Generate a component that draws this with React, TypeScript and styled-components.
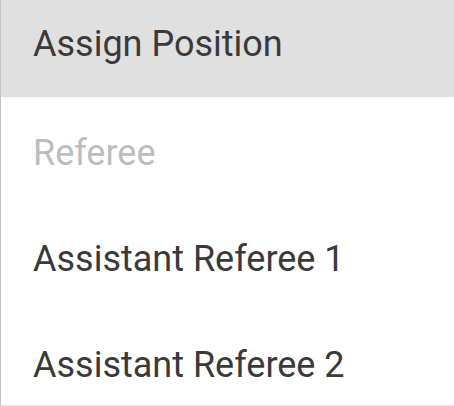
import * as React from "react";
import styled, { createGlobalStyle } from "styled-components";

const GlobalStyle = createGlobalStyle`
  html, body {
    margin: 0;
    padding: 0;
    background: #ffffff;
  }
  body {
    font-family: Roboto, "Liberation Sans", sans-serif;
  }
`;

const Wrapper = styled.div`
  display: flex;
  flex-direction: column;
  height: 405px;
  overflow: hidden;
  background: #ffffff;
  border-left: 1px solid #c4c4c4;
  border-bottom: 1px solid #dedede;
`;

const Header = styled.div`
  flex: none;
  box-sizing: border-box;
  height: 97px;
  padding: 23px 0 0 32px;
  background: #e0e0e0;
  box-shadow: 0 1px 3px rgba(0, 0, 0, 0.06);
  font-size: 36px;
  line-height: 42px;
  color: #3a3a3a;
`;

const List = styled.div`
  display: flex;
  flex-direction: column;
  padding-top: 3px;
`;

const Item = styled.div<{ $disabled?: boolean }>`
  flex: none;
  height: 106px;
  display: flex;
  align-items: center;
  padding-left: 32px;
  font-size: 36px;
  color: ${(p) => (p.$disabled ? "#bdbdbd" : "#3a3a3a")};
`;

const items = [
  { label: "Referee", disabled: true },
  { label: "Assistant Referee 1" },
  { label: "Assistant Referee 2" },
];

export default function App() {
  return (
    <>
      <GlobalStyle />
      <Wrapper>
        <Header>Assign Position</Header>
        <List>
          {items.map((it) => (
            <Item key={it.label} $disabled={it.disabled}>
              {it.label}
            </Item>
          ))}
        </List>
      </Wrapper>
    </>
  );
}
